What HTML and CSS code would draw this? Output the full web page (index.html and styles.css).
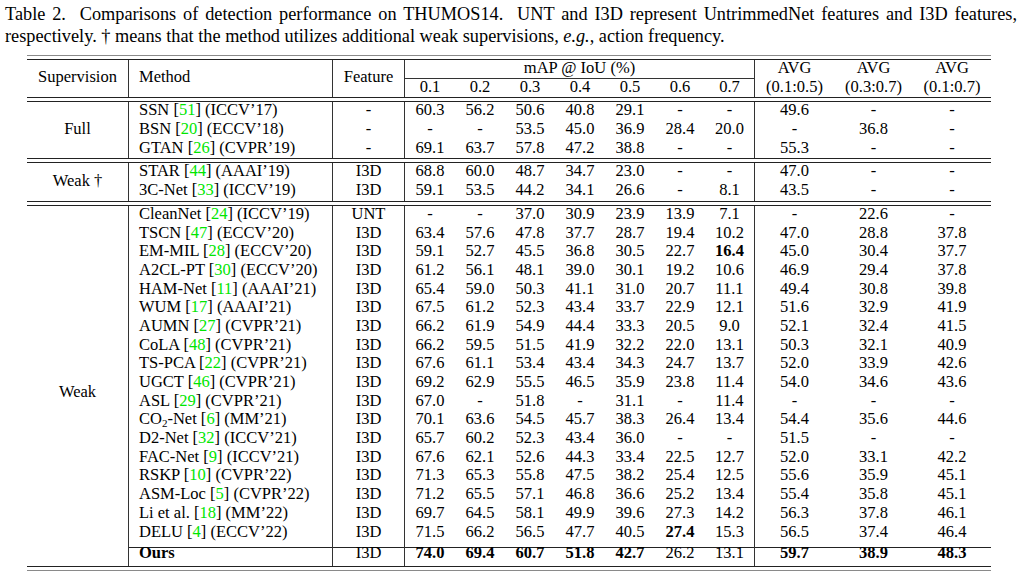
FILE: index.html
```html
<!DOCTYPE html>
<html>
<head>
<meta charset="utf-8">
<link rel="stylesheet" href="styles.css">
</head>
<body>
<div class="caption">
  <div class="cap-l1">Table 2.&nbsp; Comparisons of detection performance on THUMOS14.&nbsp; UNT and I3D represent UntrimmedNet features and I3D features,</div>
  <div class="cap-l2">respectively. † means that the method utilizes additional weak supervisions, <i>e.g.</i>, action frequency.</div>
</div>
<table class="tbl">
  <colgroup>
    <col class="w-sup"><col class="w-meth"><col class="w-feat">
    <col class="w-d"><col class="w-d"><col class="w-d"><col class="w-d"><col class="w-d"><col class="w-d"><col class="w-d">
    <col class="w-a1"><col class="w-a1"><col class="w-a3">
  </colgroup>
  <tbody>
    <tr class="dbl top"><td colspan="13"></td></tr>
    <tr>
      <td rowspan="2" class="sup vr">Supervision</td>
      <td rowspan="2" class="meth vr mid">Method</td>
      <td rowspan="2" class="vr mid">Feature</td>
      <td colspan="7" class="span-head vr">mAP @ IoU (%)</td>
      <td>AVG</td><td>AVG</td><td>AVG</td>
    </tr>
    <tr>
      <td>0.1</td><td>0.2</td><td>0.3</td><td>0.4</td><td>0.5</td><td>0.6</td><td class="vr">0.7</td>
      <td>(0.1:0.5)</td><td>(0.3:0.7)</td><td>(0.1:0.7)</td>
    </tr>
    <tr class="dbl"><td colspan="13"></td></tr>

    <tr>
      <td rowspan="3" class="sup vr">Full</td>
      <td class="meth vr">SSN [<span class="c">51</span>] (ICCV’17)</td><td class="vr">-</td>
      <td>60.3</td><td>56.2</td><td>50.6</td><td>40.8</td><td>29.1</td><td>-</td><td class="vr">-</td>
      <td>49.6</td><td>-</td><td>-</td>
    </tr>
    <tr>
      <td class="meth vr">BSN [<span class="c">20</span>] (ECCV’18)</td><td class="vr">-</td>
      <td>-</td><td>-</td><td>53.5</td><td>45.0</td><td>36.9</td><td>28.4</td><td class="vr">20.0</td>
      <td>-</td><td>36.8</td><td>-</td>
    </tr>
    <tr>
      <td class="meth vr">GTAN [<span class="c">26</span>] (CVPR’19)</td><td class="vr">-</td>
      <td>69.1</td><td>63.7</td><td>57.8</td><td>47.2</td><td>38.8</td><td>-</td><td class="vr">-</td>
      <td>55.3</td><td>-</td><td>-</td>
    </tr>
    <tr class="dbl"><td colspan="13"></td></tr>

    <tr>
      <td rowspan="2" class="sup vr">Weak †</td>
      <td class="meth vr">STAR [<span class="c">44</span>] (AAAI’19)</td><td class="vr">I3D</td>
      <td>68.8</td><td>60.0</td><td>48.7</td><td>34.7</td><td>23.0</td><td>-</td><td class="vr">-</td>
      <td>47.0</td><td>-</td><td>-</td>
    </tr>
    <tr>
      <td class="meth vr">3C-Net [<span class="c">33</span>] (ICCV’19)</td><td class="vr">I3D</td>
      <td>59.1</td><td>53.5</td><td>44.2</td><td>34.1</td><td>26.6</td><td>-</td><td class="vr">8.1</td>
      <td>43.5</td><td>-</td><td>-</td>
    </tr>
    <tr class="dbl"><td colspan="13"></td></tr>

    <tr>
      <td rowspan="19" class="sup weak vr">Weak</td>
      <td class="meth vr">CleanNet [<span class="c">24</span>] (ICCV’19)</td><td class="vr">UNT</td>
      <td>-</td><td>-</td><td>37.0</td><td>30.9</td><td>23.9</td><td>13.9</td><td class="vr">7.1</td>
      <td>-</td><td>22.6</td><td>-</td>
    </tr>
    <tr>
      <td class="meth vr">TSCN [<span class="c">47</span>] (ECCV’20)</td><td class="vr">I3D</td>
      <td>63.4</td><td>57.6</td><td>47.8</td><td>37.7</td><td>28.7</td><td>19.4</td><td class="vr">10.2</td>
      <td>47.0</td><td>28.8</td><td>37.8</td>
    </tr>
    <tr>
      <td class="meth vr">EM-MIL [<span class="c">28</span>] (ECCV’20)</td><td class="vr">I3D</td>
      <td>59.1</td><td>52.7</td><td>45.5</td><td>36.8</td><td>30.5</td><td>22.7</td><td class="vr"><b>16.4</b></td>
      <td>45.0</td><td>30.4</td><td>37.7</td>
    </tr>
    <tr>
      <td class="meth vr">A2CL-PT [<span class="c">30</span>] (ECCV’20)</td><td class="vr">I3D</td>
      <td>61.2</td><td>56.1</td><td>48.1</td><td>39.0</td><td>30.1</td><td>19.2</td><td class="vr">10.6</td>
      <td>46.9</td><td>29.4</td><td>37.8</td>
    </tr>
    <tr>
      <td class="meth vr">HAM-Net [<span class="c">11</span>] (AAAI’21)</td><td class="vr">I3D</td>
      <td>65.4</td><td>59.0</td><td>50.3</td><td>41.1</td><td>31.0</td><td>20.7</td><td class="vr">11.1</td>
      <td>49.4</td><td>30.8</td><td>39.8</td>
    </tr>
    <tr>
      <td class="meth vr">WUM [<span class="c">17</span>] (AAAI’21)</td><td class="vr">I3D</td>
      <td>67.5</td><td>61.2</td><td>52.3</td><td>43.4</td><td>33.7</td><td>22.9</td><td class="vr">12.1</td>
      <td>51.6</td><td>32.9</td><td>41.9</td>
    </tr>
    <tr>
      <td class="meth vr">AUMN [<span class="c">27</span>] (CVPR’21)</td><td class="vr">I3D</td>
      <td>66.2</td><td>61.9</td><td>54.9</td><td>44.4</td><td>33.3</td><td>20.5</td><td class="vr">9.0</td>
      <td>52.1</td><td>32.4</td><td>41.5</td>
    </tr>
    <tr>
      <td class="meth vr">CoLA [<span class="c">48</span>] (CVPR’21)</td><td class="vr">I3D</td>
      <td>66.2</td><td>59.5</td><td>51.5</td><td>41.9</td><td>32.2</td><td>22.0</td><td class="vr">13.1</td>
      <td>50.3</td><td>32.1</td><td>40.9</td>
    </tr>
    <tr>
      <td class="meth vr">TS-PCA [<span class="c">22</span>] (CVPR’21)</td><td class="vr">I3D</td>
      <td>67.6</td><td>61.1</td><td>53.4</td><td>43.4</td><td>34.3</td><td>24.7</td><td class="vr">13.7</td>
      <td>52.0</td><td>33.9</td><td>42.6</td>
    </tr>
    <tr>
      <td class="meth vr">UGCT [<span class="c">46</span>] (CVPR’21)</td><td class="vr">I3D</td>
      <td>69.2</td><td>62.9</td><td>55.5</td><td>46.5</td><td>35.9</td><td>23.8</td><td class="vr">11.4</td>
      <td>54.0</td><td>34.6</td><td>43.6</td>
    </tr>
    <tr>
      <td class="meth vr">ASL [<span class="c">29</span>] (CVPR’21)</td><td class="vr">I3D</td>
      <td>67.0</td><td>-</td><td>51.8</td><td>-</td><td>31.1</td><td>-</td><td class="vr">11.4</td>
      <td>-</td><td>-</td><td>-</td>
    </tr>
    <tr>
      <td class="meth vr">CO<sub>2</sub>-Net [<span class="c">6</span>] (MM’21)</td><td class="vr">I3D</td>
      <td>70.1</td><td>63.6</td><td>54.5</td><td>45.7</td><td>38.3</td><td>26.4</td><td class="vr">13.4</td>
      <td>54.4</td><td>35.6</td><td>44.6</td>
    </tr>
    <tr>
      <td class="meth vr">D2-Net [<span class="c">32</span>] (ICCV’21)</td><td class="vr">I3D</td>
      <td>65.7</td><td>60.2</td><td>52.3</td><td>43.4</td><td>36.0</td><td>-</td><td class="vr">-</td>
      <td>51.5</td><td>-</td><td>-</td>
    </tr>
    <tr>
      <td class="meth vr">FAC-Net [<span class="c">9</span>] (ICCV’21)</td><td class="vr">I3D</td>
      <td>67.6</td><td>62.1</td><td>52.6</td><td>44.3</td><td>33.4</td><td>22.5</td><td class="vr">12.7</td>
      <td>52.0</td><td>33.1</td><td>42.2</td>
    </tr>
    <tr>
      <td class="meth vr">RSKP [<span class="c">10</span>] (CVPR’22)</td><td class="vr">I3D</td>
      <td>71.3</td><td>65.3</td><td>55.8</td><td>47.5</td><td>38.2</td><td>25.4</td><td class="vr">12.5</td>
      <td>55.6</td><td>35.9</td><td>45.1</td>
    </tr>
    <tr>
      <td class="meth vr">ASM-Loc [<span class="c">5</span>] (CVPR’22)</td><td class="vr">I3D</td>
      <td>71.2</td><td>65.5</td><td>57.1</td><td>46.8</td><td>36.6</td><td>25.2</td><td class="vr">13.4</td>
      <td>55.4</td><td>35.8</td><td>45.1</td>
    </tr>
    <tr>
      <td class="meth vr">Li et al. [<span class="c">18</span>] (MM’22)</td><td class="vr">I3D</td>
      <td>69.7</td><td>64.5</td><td>58.1</td><td>49.9</td><td>39.6</td><td>27.3</td><td class="vr">14.2</td>
      <td>56.3</td><td>37.8</td><td>46.1</td>
    </tr>
    <tr>
      <td class="meth vr">DELU [<span class="c">4</span>] (ECCV’22)</td><td class="vr">I3D</td>
      <td>71.5</td><td>66.2</td><td>56.5</td><td>47.7</td><td>40.5</td><td><b>27.4</b></td><td class="vr">15.3</td>
      <td>56.5</td><td>37.4</td><td>46.4</td>
    </tr>
    <tr class="ours">
      <td class="meth vr"><b>Ours</b></td><td class="vr">I3D</td>
      <td><b>74.0</b></td><td><b>69.4</b></td><td><b>60.7</b></td><td><b>51.8</b></td><td><b>42.7</b></td><td>26.2</td><td class="vr">13.1</td>
      <td><b>59.7</b></td><td><b>38.9</b></td><td><b>48.3</b></td>
    </tr>
    <tr class="dbl bottom"><td colspan="13"></td></tr>
  </tbody>
</table>
</body>
</html>
```

FILE: styles.css
```css
html, body {
  margin: 0;
  padding: 0;
  background: #fff;
}

body {
  font-family: "Liberation Serif", "Times New Roman", serif;
  font-size: 16px;
  color: #000;
}

.caption {
  margin: 0 7px 0 5px;
  padding-top: 3px;
  font-size: 18.3px;
  line-height: 22px;
}

.cap-l1 {
  text-align: justify;
  text-align-last: justify;
  white-space: nowrap;
}

.cap-l2 {
  text-align: left;
}

.tbl {
  margin: 8px 0 0 27px;
  width: 964px;
  table-layout: fixed;
  border-collapse: separate;
  border-spacing: 0;
  font-size: 16.5px;
}

.w-sup { width: 102px; }
.w-meth { width: 204px; }
.w-feat { width: 72px; }
.w-d { width: 50px; }
.w-a1 { width: 79px; }
.w-a3 { width: 78px; }

.tbl td {
  padding: 0 0 2.7px 0;
  line-height: 16px;
  text-align: center;
  vertical-align: top;
  white-space: nowrap;
}

.tbl td.vr {
  border-right: 1px solid #333;
}

.tbl td.meth {
  text-align: left;
  padding-left: 10px;
}

.tbl td.sup,
.tbl td.mid {
  vertical-align: middle;
}

.tbl td.weak {
  padding-top: 16px;
}

.tbl td.span-head {
  border-bottom: 1px solid #333;
  padding-bottom: 1.7px;
}

.tbl tr.dbl td {
  padding: 3px 0 0 0;
  height: 0;
  font-size: 0;
  line-height: 0;
  border-top: 1px solid #222;
  border-bottom: 1px solid #222;
}

.tbl tr.dbl.top td {
  border-top-color: #8a8a8a;
}

.tbl tr.dbl.bottom td {
  border-bottom-color: #8a8a8a;
}

.tbl tr.ours td {
  padding-top: 3.2px;
  padding-bottom: 4.3px;
  background-image: linear-gradient(#222, #222);
  background-repeat: no-repeat;
  background-size: 100% 1px;
  background-position: 0 5px;
}

.c {
  color: #00e600;
}

sub {
  font-size: 11px;
  line-height: 0;
  vertical-align: -3px;
}
```
